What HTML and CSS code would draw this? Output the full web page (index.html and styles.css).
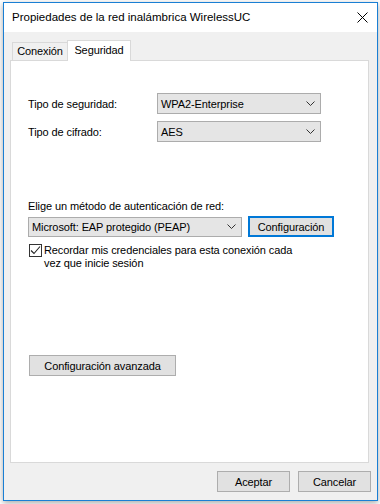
FILE: index.html
```html
<!DOCTYPE html>
<html lang="es">
<head>
    <meta charset="UTF-8">
    <title>Propiedades de la red inalámbrica WirelessUC</title>
    <link rel="stylesheet" href="styles.css">
</head>
<body>
    <div class="window">
        <div class="titlebar">
            <span class="title">Propiedades de la red inalámbrica WirelessUC</span>
            <svg class="close" width="11" height="11" viewBox="0 0 11 11">
                <path d="M0.5 0.5 L10.5 10.5 M10.5 0.5 L0.5 10.5" stroke="#000" stroke-width="1" fill="none"/>
            </svg>
        </div>

        <div class="client">
            <div class="tabs">
                <div class="tab">Conexión</div>
                <div class="tab active">Seguridad</div>
            </div>

            <div class="panel">
                <div class="field-row first">
                    <span class="field-label">Tipo de seguridad:</span>
                    <div class="combo wide">
                        <span>WPA2-Enterprise</span>
                        <svg class="chevron" width="9" height="5" viewBox="0 0 9 5"><path d="M0.5 0.5 L4.5 4.5 L8.5 0.5" stroke="#333" fill="none"/></svg>
                    </div>
                </div>
                <div class="field-row">
                    <span class="field-label">Tipo de cifrado:</span>
                    <div class="combo wide">
                        <span>AES</span>
                        <svg class="chevron" width="9" height="5" viewBox="0 0 9 5"><path d="M0.5 0.5 L4.5 4.5 L8.5 0.5" stroke="#333" fill="none"/></svg>
                    </div>
                </div>

                <div class="auth-label">Elige un método de autenticación de red:</div>
                <div class="auth-row">
                    <div class="combo method">
                        <span>Microsoft: EAP protegido (PEAP)</span>
                        <svg class="chevron" width="9" height="5" viewBox="0 0 9 5"><path d="M0.5 0.5 L4.5 4.5 L8.5 0.5" stroke="#333" fill="none"/></svg>
                    </div>
                    <button class="btn focused config-btn">Configuración</button>
                </div>

                <div class="check-row">
                    <span class="checkbox">
                        <svg width="11" height="11" viewBox="0 0 11 11"><path d="M1 5.5 L4 8.5 L10 1.5" stroke="#222" stroke-width="1.1" fill="none"/></svg>
                    </span>
                    <span class="check-text">Recordar mis credenciales para esta conexión cada<br>vez que inicie sesión</span>
                </div>

                <button class="btn advanced-btn">Configuración avanzada</button>
            </div>

            <div class="footer">
                <button class="btn footer-btn">Aceptar</button>
                <button class="btn footer-btn">Cancelar</button>
            </div>
        </div>
    </div>
</body>
</html>
```

FILE: styles.css
```css
* {
    margin: 0;
    padding: 0;
    box-sizing: border-box;
}

body {
    font-family: "Liberation Sans", Arial, sans-serif;
    font-size: 11px;
    letter-spacing: -0.1px;
    color: #000;
    background: #fff;
    width: 380px;
    height: 504px;
    overflow: hidden;
}

.window {
    margin: 2px 0 0 3px;
    width: 375px;
    height: 499px;
    border: 1px solid #1a7fd4;
    background: #f0f0f0;
    display: flex;
    flex-direction: column;
    box-shadow: 0 2px 6px rgba(0, 0, 0, 0.35);
}

.titlebar {
    height: 29px;
    flex: none;
    background: #fff;
    display: flex;
    align-items: center;
    justify-content: space-between;
    padding: 0 8px 0 8px;
}

.title {
    font-size: 11.5px;
    letter-spacing: 0;
    line-height: 15px;
}

.close {
    display: block;
    margin-right: 1px;
}

.client {
    flex: 1;
    padding: 8px 8px 0 6px;
    display: flex;
    flex-direction: column;
}

.tabs {
    display: flex;
    align-items: flex-end;
    height: 20px;
    padding-left: 2px;
}

.tab {
    height: 18px;
    width: 56px;
    border: 1px solid #d9d9d9;
    border-bottom: none;
    background: #f0f0f0;
    text-align: center;
    line-height: 17px;
}

.tab.active {
    width: 64px;
    height: 21px;
    margin-left: -1px;
    margin-bottom: -1px;
    background: #fff;
    position: relative;
    z-index: 1;
    line-height: 18px;
}

.panel {
    width: 359px;
    height: 403px;
    border: 1px solid #d9d9d9;
    background: #fff;
    padding: 0 0 0 17px;
}

.field-row {
    display: flex;
    align-items: center;
    height: 21px;
    margin-top: 7px;
}

.field-row.first {
    margin-top: 32px;
}

.field-label {
    width: 129px;
}

.combo {
    height: 21px;
    border: 1px solid #acacac;
    background: #e5e5e5;
    display: flex;
    align-items: center;
    justify-content: space-between;
    padding: 0 5px 0 3px;
}

.combo.wide {
    width: 164px;
}

.combo.method {
    width: 214px;
    height: 20px;
}

.chevron {
    display: block;
}

.auth-label {
    margin-top: 57px;
    line-height: 15px;
}

.auth-row {
    display: flex;
    align-items: center;
    height: 21px;
    margin-top: 2px;
}

.btn {
    font-family: inherit;
    font-size: 11px;
    letter-spacing: -0.1px;
    color: #000;
    background: #e1e1e1;
    border: 1px solid #adadad;
    height: 21px;
    text-align: center;
}

.btn.focused {
    border: 2px solid #0078d7;
}

.config-btn {
    width: 86px;
    margin-left: 6px;
}

.check-row {
    display: flex;
    align-items: flex-start;
    margin-top: 7px;
    margin-left: 1px;
}

.checkbox {
    width: 13px;
    height: 13px;
    border: 1px solid #333;
    background: #fff;
    display: flex;
    align-items: center;
    justify-content: center;
    margin-right: 2px;
}

.checkbox svg {
    display: block;
}

.check-text {
    line-height: 13px;
}

.advanced-btn {
    display: block;
    width: 147px;
    margin: 85px 0 0 1px;
}

.footer {
    display: flex;
    justify-content: flex-end;
    gap: 8px;
    margin: 8px -2px 0 0;
}

.footer-btn {
    width: 73px;
}
```
